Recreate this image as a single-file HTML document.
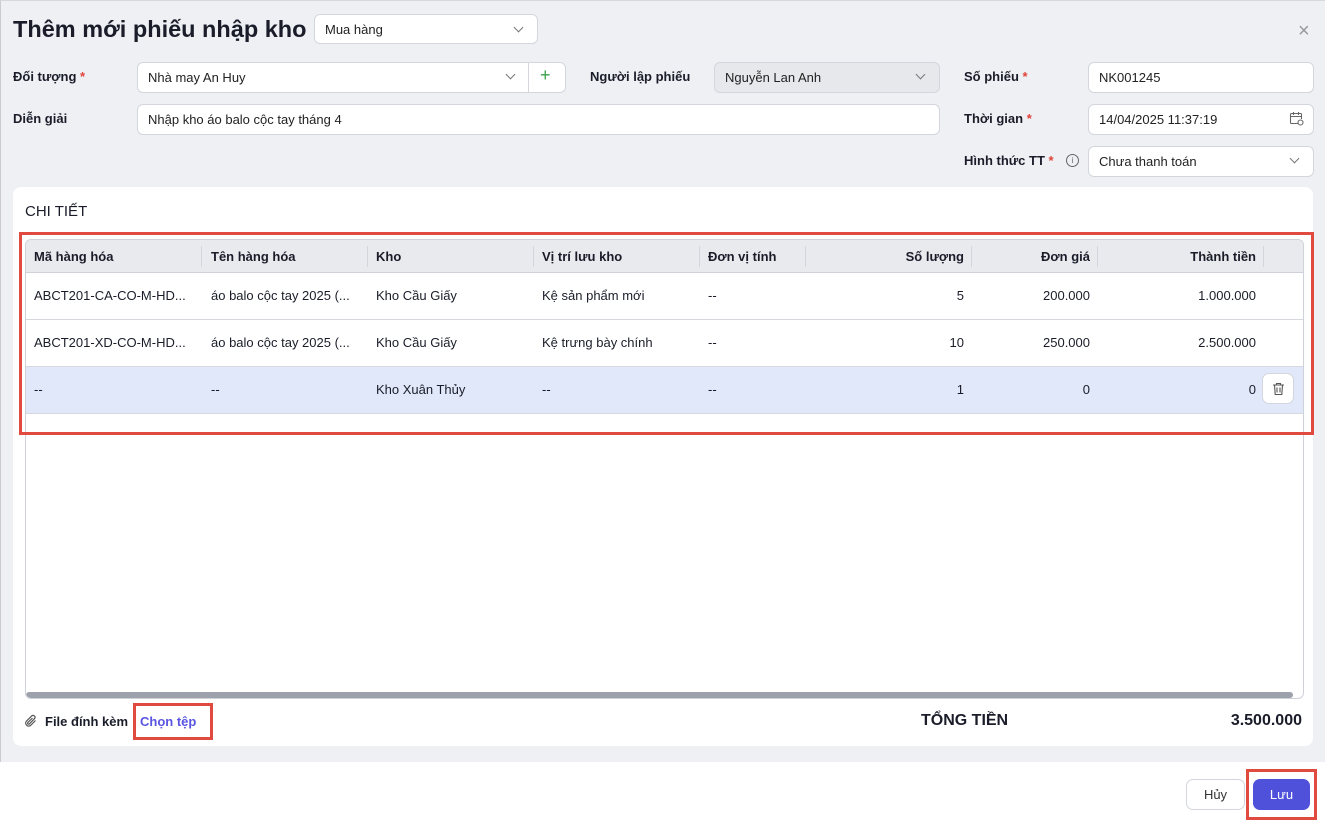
<!DOCTYPE html>
<html><head><meta charset="utf-8"><style>
*{box-sizing:border-box;margin:0;padding:0}
body{width:1325px;height:825px;position:relative;overflow:hidden;background:#fff;font-family:"Liberation Sans",sans-serif;color:#1a1d29;font-size:13px}
.top{position:absolute;left:0;top:0;width:1325px;height:762px;background:#eef0f4;border-left:1px solid #ccc;border-top:1px solid #d6d8dc}
.abs{position:absolute}
.inp{position:absolute;background:#fff;border:1px solid #d3d6dc;border-radius:6px;height:31px;line-height:29px;padding-left:10px;font-size:13px;color:#222}
.lbl{position:absolute;font-weight:bold;font-size:13px;color:#1a1d29}
.req{color:#e0433a}
.chev{position:absolute;width:7px;height:7px;border-right:1px solid #777;border-bottom:1px solid #777;transform:rotate(45deg)}
.card{position:absolute;left:13px;top:187px;width:1300px;height:559px;background:#fff;border-radius:8px}
.tbl{position:absolute;left:25px;top:239px;width:1279px;height:460px;border:1px solid #cfd2d8;border-radius:6px;overflow:hidden}
.hd{position:absolute;left:0;top:0;width:100%;height:33px;background:#e8eaee;border-bottom:1px solid #cfd2d8}
.c{position:absolute;font-size:13px;white-space:nowrap}
.h{font-weight:bold;top:9px}
.row{position:absolute;left:0;width:100%;height:47px;border-bottom:1px solid #d6d8dd}
.sep{position:absolute;top:6px;width:1px;height:21px;background:#d3d6dc}
.red{position:absolute;border:3px solid #e04a3f}
</style></head><body>
<div class="top"></div>
<div class="abs" style="left:13px;top:16px;font-size:23.5px;font-weight:bold;color:#1a1d29">Thêm mới phiếu nhập kho</div>
<div class="inp" style="left:314px;top:14px;width:224px;height:30px;font-size:13px">Mua hàng</div>
<div class="chev" style="left:515px;top:24px"></div>
<div class="abs" style="left:1298px;top:20px;font-size:20px;color:#999">×</div>

<div class="lbl" style="left:13px;top:69px">Đối tượng <span class="req">*</span></div>
<div class="inp" style="left:137px;top:62px;width:429px">Nhà may An Huy</div>
<div class="chev" style="left:507px;top:71px"></div>
<div class="abs" style="left:528px;top:63px;width:1px;height:29px;background:#d3d6dc"></div>
<div class="abs" style="left:540px;top:65px;font-size:18px;color:#3aa24a">+</div>
<div class="lbl" style="left:590px;top:69px">Người lập phiếu</div>
<div class="inp" style="left:714px;top:62px;width:226px;background:#e6e8ec">Nguyễn Lan Anh</div>
<div class="chev" style="left:917px;top:71px"></div>
<div class="lbl" style="left:964px;top:69px">Số phiếu <span class="req">*</span></div>
<div class="inp" style="left:1088px;top:62px;width:226px">NK001245</div>

<div class="lbl" style="left:13px;top:111px">Diễn giải</div>
<div class="inp" style="left:137px;top:104px;width:803px">Nhập kho áo balo cộc tay tháng 4</div>
<div class="lbl" style="left:964px;top:111px">Thời gian <span class="req">*</span></div>
<div class="inp" style="left:1088px;top:104px;width:226px">14/04/2025 11:37:19</div>
<svg class="abs" style="left:1289px;top:111px" width="15" height="15" viewBox="0 0 15 15" fill="none" stroke="#666" stroke-width="1.1"><path d="M9 12.5H2.5a1 1 0 0 1-1-1V3.5a1 1 0 0 1 1-1h9a1 1 0 0 1 1 1V8M1.5 5.5h11M4.5 1v3M9.5 1v3"/><circle cx="11.5" cy="11.5" r="2.5"/></svg>
<div class="lbl" style="left:964px;top:153px">Hình thức TT <span class="req">*</span></div>
<div class="abs" style="left:1066px;top:154px;width:13px;height:13px;border:1px solid #666;border-radius:50%;font-size:8px;text-align:center;line-height:11px;color:#666">i</div>
<div class="inp" style="left:1088px;top:146px;width:226px">Chưa thanh toán</div>
<div class="chev" style="left:1291px;top:155px"></div>

<div class="card"></div>
<div class="abs" style="left:25px;top:203px;font-size:15px;font-weight:500">CHI TIẾT</div>
<div class="tbl">
 <div class="hd">
  <div class="c h" style="left:8px">Mã hàng hóa</div>
  <div class="sep" style="left:175px"></div>
  <div class="c h" style="left:185px">Tên hàng hóa</div>
  <div class="sep" style="left:341px"></div>
  <div class="c h" style="left:350px">Kho</div>
  <div class="sep" style="left:507px"></div>
  <div class="c h" style="left:516px">Vị trí lưu kho</div>
  <div class="sep" style="left:673px"></div>
  <div class="c h" style="left:682px">Đơn vị tính</div>
  <div class="sep" style="left:779px"></div>
  <div class="c h" style="right:339px">Số lượng</div>
  <div class="sep" style="left:945px"></div>
  <div class="c h" style="right:213px">Đơn giá</div>
  <div class="sep" style="left:1071px"></div>
  <div class="c h" style="right:47px">Thành tiền</div>
  <div class="sep" style="left:1237px"></div>
 </div>
 <div class="row" style="top:33px"><div class="c" style="left:8px;top:15px">ABCT201-CA-CO-M-HD...</div><div class="c" style="left:185px;top:15px">áo balo cộc tay 2025 (...</div><div class="c" style="left:350px;top:15px">Kho Cầu Giấy</div><div class="c" style="left:516px;top:15px">Kệ sản phẩm mới</div><div class="c" style="left:682px;top:15px">--</div><div class="c" style="right:339px;top:15px">5</div><div class="c" style="right:213px;top:15px">200.000</div><div class="c" style="right:47px;top:15px">1.000.000</div></div>
 <div class="row" style="top:80px"><div class="c" style="left:8px;top:15px">ABCT201-XD-CO-M-HD...</div><div class="c" style="left:185px;top:15px">áo balo cộc tay 2025 (...</div><div class="c" style="left:350px;top:15px">Kho Cầu Giấy</div><div class="c" style="left:516px;top:15px">Kệ trưng bày chính</div><div class="c" style="left:682px;top:15px">--</div><div class="c" style="right:339px;top:15px">10</div><div class="c" style="right:213px;top:15px">250.000</div><div class="c" style="right:47px;top:15px">2.500.000</div></div>
 <div class="row" style="top:127px;background:#e0e8fa"><div class="c" style="left:8px;top:15px">--</div><div class="c" style="left:185px;top:15px">--</div><div class="c" style="left:350px;top:15px">Kho Xuân Thủy</div><div class="c" style="left:516px;top:15px">--</div><div class="c" style="left:682px;top:15px">--</div><div class="c" style="right:339px;top:15px">1</div><div class="c" style="right:213px;top:15px">0</div><div class="c" style="right:47px;top:15px">0</div>
  <div class="abs" style="left:1236px;top:6px;width:32px;height:31px;background:#fff;border:1px solid #d3d6dc;border-radius:7px"><svg style="position:absolute;left:9px;top:8px" width="13" height="14" viewBox="0 0 13 14" fill="none" stroke="#555" stroke-width="1.1"><path d="M1 3h11M4.5 3V1.5h4V3M2.5 3l.7 9.5h6.6L10.5 3M5 5.5v5M8 5.5v5"/></svg></div></div>
 <div class="abs" style="left:0;bottom:0;width:1267px;height:6px;background:#9ca1ab;border-radius:3px"></div>
</div>
<div class="red" style="left:19px;top:232px;width:1295px;height:203px"></div>

<svg class="abs" style="left:24px;top:714px" width="14" height="14" viewBox="0 0 14 14" fill="none" stroke="#555" stroke-width="1.2"><path d="M11.5 6.5l-5 5a3 3 0 0 1-4.2-4.2l5.5-5.5a2 2 0 0 1 2.8 2.8L5.2 10A1 1 0 0 1 3.8 8.6L8.5 4"/></svg>
<div class="abs" style="left:45px;top:714px;font-size:13px;font-weight:bold">File đính kèm</div>
<div class="abs" style="left:140px;top:714px;font-size:13px;color:#5a55e0;font-weight:bold">Chọn tệp</div>
<div class="red" style="left:133px;top:703px;width:80px;height:37px"></div>
<div class="abs" style="left:921px;top:712px;font-size:16px;font-weight:bold">TỔNG TIỀN</div>
<div class="abs" style="right:23px;top:712px;font-size:16px;font-weight:bold">3.500.000</div>

<div class="abs" style="left:1186px;top:779px;width:59px;height:31px;border:1px solid #d3d6dc;border-radius:7px;text-align:center;line-height:29px;color:#333">Hủy</div>
<div class="abs" style="left:1253px;top:779px;width:57px;height:31px;background:#5051db;border-radius:7px;text-align:center;line-height:31px;color:#fff">Lưu</div>
<div class="red" style="left:1246px;top:769px;width:71px;height:51px"></div>
</body></html>
